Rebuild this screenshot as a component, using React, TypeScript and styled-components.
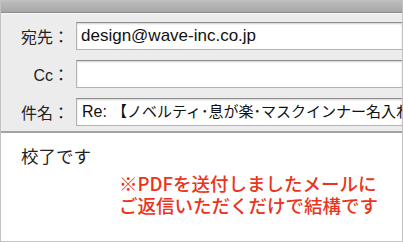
import styled, { createGlobalStyle } from "styled-components";

const GlobalStyle = createGlobalStyle`
  * {
    box-sizing: border-box;
  }

  body {
    margin: 0;
    background: #ffffff;
    font-family: "Liberation Sans", "Noto Sans CJK JP", sans-serif;
  }
`;

const FIELDS = [
  { label: "宛先：", value: "design@wave-inc.co.jp" },
  { label: "Cc：", value: "" },
];

const App = () => {
  return (
    <>
      <GlobalStyle />
      <MailFrame>
        <TitleBar />
        <HeaderArea>
          {FIELDS.map(({ label, value }) => (
            <FieldRow key={label}>
              <FieldLabel>{label}</FieldLabel>
              <FieldInput>{value}</FieldInput>
            </FieldRow>
          ))}
          <FieldRow>
            <FieldLabel>件名：</FieldLabel>
            <FieldInput $small>
              <Prefix>Re:</Prefix>【ノベルティ･息が楽･マスクインナー名入れ
            </FieldInput>
          </FieldRow>
        </HeaderArea>
        <MailBody>
          <BodyText>校了です</BodyText>
          <Note>
            ※PDFを送付しましたメールに
            <br />
            ご返信いただくだけで結構です
          </Note>
        </MailBody>
      </MailFrame>
    </>
  );
};

export default App;

const MailFrame = styled.div`
  width: 403px;
  height: 242px;

  border: 1px solid #c2c2c2;
  background: #ffffff;

  display: flex;
  flex-direction: column;

  overflow: hidden;
`;

const TitleBar = styled.div`
  height: 12px;
  flex-shrink: 0;

  background: linear-gradient(#bdbdbd, #a6a6a6);
  border-bottom: 1px solid #8e8e8e;
`;

const HeaderArea = styled.div`
  padding: 8px 0 5px 20px;

  display: flex;
  flex-direction: column;
  gap: 10px;

  background: #ececec;
  border-top: 1px solid #f6f6f6;
  border-bottom: 2px solid #a3a3a3;
`;

const FieldRow = styled.div`
  height: 28px;

  display: flex;
  align-items: center;
  gap: 7px;
`;

const FieldLabel = styled.span`
  width: 48px;
  flex-shrink: 0;

  color: #222222;
  font-size: 16px;
  text-align: right;
  white-space: nowrap;
`;

const FieldInput = styled.div<{ $small?: boolean }>`
  flex: 1;
  height: 28px;

  padding-left: ${({ $small }) => ($small ? "5px" : "4px")};

  background: #ffffff;
  border: 1px solid #b4b4b4;
  border-top-color: #8c8c8c;
  border-right: none;
  box-shadow: inset 0 1px 2px rgba(0, 0, 0, 0.18);

  color: #111111;
  font-size: ${({ $small }) => ($small ? "15px" : "17px")};
  line-height: 26px;
  white-space: nowrap;

  overflow: hidden;
`;

const Prefix = styled.span`
  margin-right: 5px;
  font-size: 16px;
`;

const MailBody = styled.div`
  padding: 11px 20px 0;
`;

const BodyText = styled.p`
  margin: 0;

  color: #222222;
  font-family: "Noto Sans CJK JP", sans-serif;
  font-size: 17.5px;
  line-height: 24px;
`;

const Note = styled.p`
  margin: 4px 0 0 98px;

  color: #ea3420;
  font-family: "Noto Sans CJK JP", sans-serif;
  font-size: 18.5px;
  font-weight: 500;
  line-height: 22px;
  white-space: nowrap;
`;
